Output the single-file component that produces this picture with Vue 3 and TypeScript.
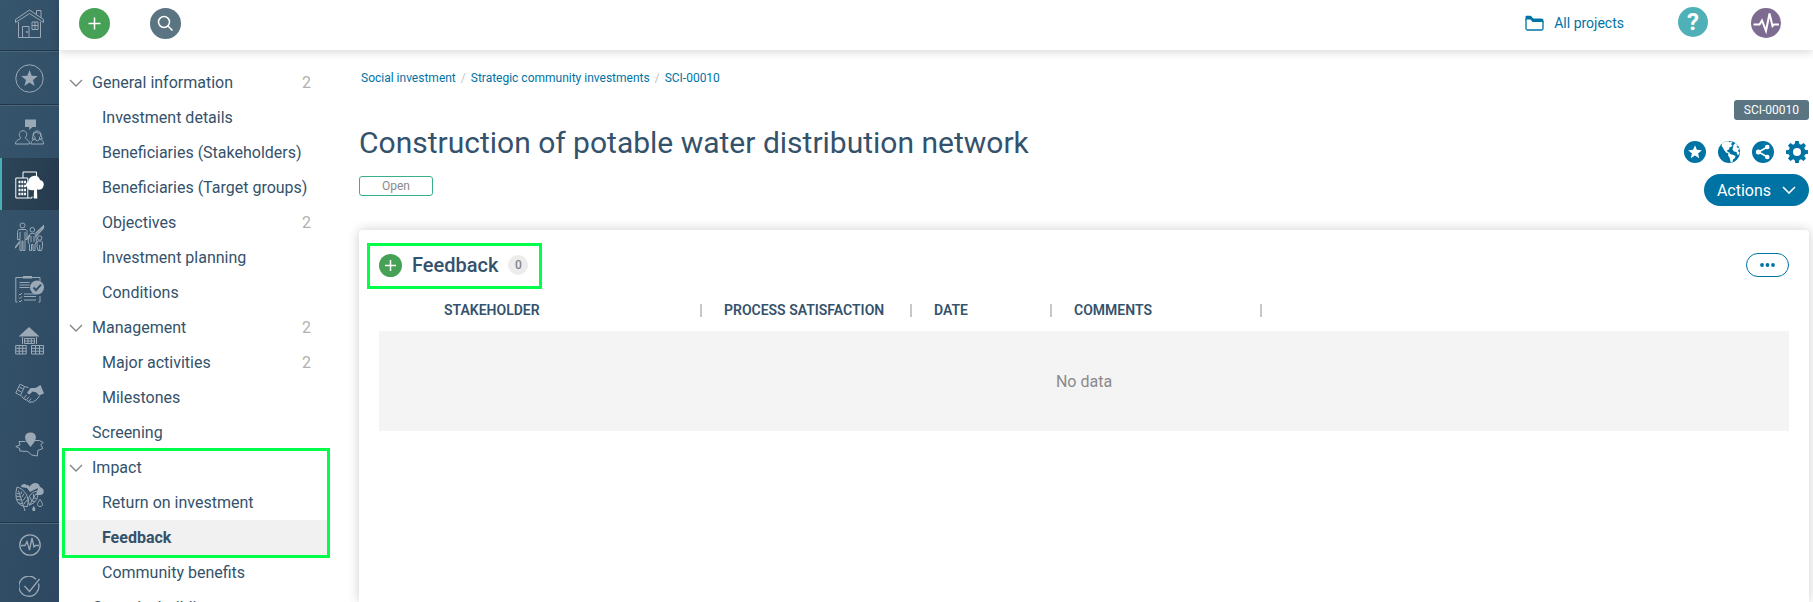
<script setup lang="ts">
interface NavRow { label: string; level: 1 | 2; open?: boolean; count?: number; active?: boolean }
interface NavGroup { marked?: boolean; rows: NavRow[] }
interface Column { label: string; width: string }

const groups: NavGroup[] = [
  {
    rows: [
      { label: 'General information', level: 1, open: true, count: 2 },
      { label: 'Investment details', level: 2 },
      { label: 'Beneficiaries (Stakeholders)', level: 2 },
      { label: 'Beneficiaries (Target groups)', level: 2 },
      { label: 'Objectives', level: 2, count: 2 },
      { label: 'Investment planning', level: 2 },
      { label: 'Conditions', level: 2 },
      { label: 'Management', level: 1, open: true, count: 2 },
      { label: 'Major activities', level: 2, count: 2 },
      { label: 'Milestones', level: 2 },
      { label: 'Screening', level: 1 },
    ],
  },
  {
    marked: true,
    rows: [
      { label: 'Impact', level: 1, open: true },
      { label: 'Return on investment', level: 2 },
      { label: 'Feedback', level: 2, active: true },
    ],
  },
  {
    rows: [
      { label: 'Community benefits', level: 2 },
      { label: 'Capacity building', level: 1 },
    ],
  },
]

const crumbs = ['Social investment', 'Strategic community investments', 'SCI-00010']

const columns: Column[] = [
  { label: 'STAKEHOLDER', width: '280px' },
  { label: 'PROCESS SATISFACTION', width: '210px' },
  { label: 'DATE', width: '140px' },
  { label: 'COMMENTS', width: '210px' },
]
</script>

<template>
  <div class="app">
    <nav class="rail" aria-label="Modules">
      <a href="#" class="rail-item first line" aria-label="Home">
        <svg class="glyph" viewBox="0 0 29 29">
          <path d="M3.5 13v15.5h22V13M.5 10.5 14.5 1l14 9.5v3l-14-9-14 9zM21.5 5.5v-4H26v7M7.5 28V17.5H14V28M17 13h6v7.500h-6zM20 13v7.500M17 16.500h6" />
          <circle class="fill" cx="12" cy="23" r="1" />
        </svg>
      </a>
      <a href="#" class="rail-item second line" aria-label="Favorites">
        <svg class="glyph" viewBox="0 0 29 29">
          <circle cx="14.5" cy="14.5" r="13.7" />
          <path class="fill" d="m14.5 6 2.200 5.800 6.100.3-4.800 3.800 1.600 6-5.100-3.400-5.100 3.400 1.600-6-4.800-3.800 6.100-.3z" />
        </svg>
      </a>
      <a href="#" class="rail-item third" aria-label="Stakeholders">
        <svg class="glyph" viewBox="0 0 29 29">
          <path class="fill" d="M10 2.500h11V10h-3.500l-3.300 3v-3H10z" />
          <path d="M5.800 20.800C3.200 18.500 4 13.700 8 13.700s4.800 4.800 2.200 7.100c0 1.700 4.300 1.500 4.300 6.200H.5c0-4.700 5.300-4.500 5.300-6.200zM20 21.500c-1 1.500-4 1.500-4 5.500h12.500c0-4-3-4-4-5.500M17 22c1.500-2 0-8 5-8s3.500 6 5.500 8l-3 .3v-2c1.500-1.300 1.300-3 1-4-2 0-3.500-.5-4.500-1.300-.5 1-2 1.500-2.500 2 0 1.500.5 2.500 1.500 3.300v2zM20 22.500l2.300 1.500 2.300-1.500" />
        </svg>
      </a>
      <a href="#" class="rail-item current" aria-label="Social investment">
        <svg class="glyph" viewBox="0 0 29 29">
          <path d="M.8 8h12v20H.8zM8 8V2h13.500v5M12.500 28H17M17 26.500V28" />
          <path d="M3.500 12h7.500M3.500 16h7.500M3.500 20h7.500M3.500 24h7.500" stroke-width="2.400" stroke-dasharray="2 .8" />
          <path class="fill" d="M18.700 28.500 19 20c-3.500 1-6.500-.5-6.500-2.500-3-2-1-5.500 1-6 0-3.500 2.500-5 5-5.500 3.500-1 6 1.500 6.500 4 3 .3 5 4 3 7 0 2-3 3-6 2.500l.3 9z" />
        </svg>
      </a>
      <a href="#" class="rail-item" aria-label="Communities">
        <svg class="glyph" viewBox="0 0 29 29">
          <circle cx="7.500" cy="3.500" r="2.500" />
          <path d="M5 7.500h5c2 0 2 1.500 2 3v7h-2v11H8V19H7v9.500H5V17.500H2.500v-7c0-1.500.5-3 2.500-3zM5 10v7M10 10v7" />
          <circle cx="17.300" cy="7.800" r="2.300" />
          <path d="M14.500 12.500c1-1.500 5-1.500 6 0l1 7-1.500 3v6h-2v-6h-1.500v6h-2v-6L13 20zM16 14v6M19 14v6" />
          <circle cx="24.700" cy="16" r="2.200" />
          <path d="M22 20c1-1.500 4.500-1.500 5.500 0v4.500l-1 4h-3.500l-1-4zM24.700 23v5" />
          <path d="m0 26 4.500-6M12 17l3-4M20.500 11.500 29 3.500v2l-8 8.500" stroke-width="1.500" />
        </svg>
      </a>
      <a href="#" class="rail-item" aria-label="Commitments">
        <svg class="glyph" viewBox="0 0 29 29">
          <path d="M2.500 28H.8V3.500H8M17 3.500h8v4M25 22v6h-1.500" />
          <path class="fill" d="M8 2h9v2.500H8z" />
          <path d="M4.500 8.500h10M4.500 11h10M4.500 13.500h10M9 20h12M9 22.500h12M9 26h12" />
          <path d="m4 20 1 1 2-2M4 23.500l1 1 2-2M4 27l1 1 2-2" />
          <circle class="fill" cx="22" cy="13.500" r="7" />
          <path class="cut" d="m18.500 13.500 2.500 2.700 5-5.500" />
        </svg>
      </a>
      <a href="#" class="rail-item" aria-label="Facilities">
        <svg class="glyph" viewBox="0 0 29 29">
          <path class="fill" d="M14 1 24.500 10.500h-21z" />
          <path d="M7.500 11v7M21.500 11v7M9.500 12.500h10v5h-10zM13 12.500v5M16.300 12.500v5M9.500 15h10M.7 19.500h10.500v8.500H.7zM4.200 19.500V28M7.700 19.500V28M.7 22.300h10.500M.7 25.200h10.500M16.500 19.500h12V28h-12zM20.500 19.500V28M24.500 19.500V28M16.500 22.300h12M16.500 25.200h12" />
        </svg>
      </a>
      <a href="#" class="rail-item" aria-label="Agreements">
        <svg class="glyph" viewBox="0 0 29 29">
          <path d="M5 6.200 9.500 8.500 5.500 17.500.8 15zM4.500 9.200l3 1.500M3 12.300l3 1.500M9.500 8.700l4 .8M6 17.500l3 3.500 2.500 1 3 2.300 4-.5 3.500-2.500 2.500-3.500M9 20l2.500-3M11.500 21.700l2.500-3M14 23.500l2-3" />
          <path class="fill" d="m12 15 3.500-5h5l5-3 3.500 8.500-5 2-2.500-3-4-1-3 3z" />
        </svg>
      </a>
      <a href="#" class="rail-item" aria-label="Land">
        <svg class="glyph" viewBox="0 0 29 29">
          <path class="fill" d="M15.500 2.500c-7 0-6 7-3.500 10l3.500 4.500 3.500-4.500c2.500-3 3.500-10-3.500-10z" />
          <path d="M10.500 11.500H4L5 15 .8 16.500l4 2v2.500l8 .5 4 3.500 5.500 1 .5-5.500 5-2-2-4 2.500-2-4-2h-4.500" />
        </svg>
      </a>
      <a href="#" class="rail-item" aria-label="Environment">
        <svg class="glyph" viewBox="0 0 29 29">
          <path class="fill" d="M6 5c0-3 4.500-4 5.500-1.500 1-1 3 0 3 1.500C17-.5 24-.5 25 5c5 1 5 8 0 8h-4l2-7-8 4-3-4z" />
          <path d="M2 5c7 2 13 9 10.500 19.500C2 25-1 16 2 5zM3.500 8.500 10 29M4.500 12 2 11.500M5.500 15 1 14M6.500 18l-5-.5M7.500 21.500l-4-.5M6 12l.7-2.500M7 15l2-3.500M8 18.500l3-4M9 22l3-4M22.500 9c-7 1-11 7-8 14C22 20 23.500 16 22.500 9zM21 11.500l-6.500 12M18.500 16l3 .5M17 19l3 .5M18.500 16v-4M16.500 19l-1-3.500" />
          <path d="M25 17.500c-3.500 4.500-3 7 0 7s3.500-2.500 0-7z" />
          <path class="fill" d="M18.800 24c-2.500 3.500-1.500 5 0 5s2.500-1.500 0-5z" />
        </svg>
      </a>
      <div class="rail-tools">
        <a href="#" class="rail-item small" aria-label="Activity">
          <svg class="glyph tiny" viewBox="0 0 22 22">
            <circle cx="11" cy="11" r="10.200" />
            <path d="M2 11.500h4l2-4 2.500 8.500 2.500-12 2 9 1.500-1.500H20" />
          </svg>
        </a>
        <a href="#" class="rail-item small" aria-label="Tasks">
          <svg class="glyph tiny" viewBox="0 0 22 22">
            <path d="M19.500 7.500A10 10 0 1 1 17 3.200M5.500 10l5 5.500L20.500 3" />
          </svg>
        </a>
      </div>
    </nav>

    <div class="shell">
      <header class="topbar">
        <button type="button" class="round green" aria-label="Add">
          <svg width="31" height="31" viewBox="0 0 31 31"><path d="M15.500 9.500v12M9.500 15.500h12" /></svg>
        </button>
        <button type="button" class="round slate" aria-label="Search">
          <svg width="31" height="31" viewBox="0 0 31 31"><circle cx="14" cy="14" r="5.500" /><path d="m18 18 4.500 4.500" /></svg>
        </button>
        <a href="#" class="projects">
          <svg width="19" height="17" viewBox="0 0 19 17">
            <path d="M1 4v9.500c0 1.200.5 1.500 1.500 1.500h14c1 0 1.500-.3 1.500-1.500V6.500" fill="none" stroke="#0073a5" stroke-width="1.300" />
            <path d="M.5 6V2.200C.5 1.300 1 .8 2 .8h3.600c1.200 0 1.600 2.700 3 2.700H16c1.500 0 2.500.8 2.500 2V8c-.3-.6-1-.9-2-.9H8.500C6.500 7.100 6.500 4.400 4.800 4.400H2C1 4.400.6 5 .5 6z" fill="#0073a5" />
          </svg>
          All projects
        </a>
        <button type="button" class="round teal" aria-label="Help">?</button>
        <button type="button" class="round purple" aria-label="Activity">
          <svg width="30" height="30" viewBox="0 0 30 30"><path d="M2.500 16.500h6l2.500-4 4 10.500L18.500 5.500l3 12.500 1.500-1.500h5" stroke-width="2" /></svg>
        </button>
      </header>

      <div class="body">
        <nav class="tree" aria-label="Sections">
          <div v-for="(group, g) in groups" :key="g" class="group">
            <a
              v-for="row in group.rows"
              :key="row.label"
              href="#"
              class="row"
              :class="{ child: row.level === 2, active: row.active }"
            >
              <span class="toggle">
                <svg v-if="row.open" width="14" height="8" viewBox="0 0 14 8"><path d="m1 1 6 6 6-6" /></svg>
              </span>
              <span class="label">{{ row.label }}</span>
              <span v-if="row.count" class="count">{{ row.count }}</span>
            </a>
            <div v-if="group.marked" class="mark"></div>
          </div>
        </nav>

        <main class="main">
          <nav class="crumbs" aria-label="Breadcrumb">
            <template v-for="(crumb, i) in crumbs" :key="crumb">
              <span v-if="i" class="slash">/</span>
              <a href="#">{{ crumb }}</a>
            </template>
          </nav>

          <div class="head">
            <div class="head-left">
              <h1>Construction of potable water distribution network</h1>
              <span class="status">Open</span>
            </div>
            <div class="head-right">
              <span class="tag">SCI-00010</span>
              <div class="icons">
                <button type="button" aria-label="Favorite">
                  <svg width="22" height="22" viewBox="0 0 22 22"><circle cx="11" cy="11" r="11" /><path class="white" d="m11 4.300 1.900 4.500 4.900.4-3.700 3.200 1.100 4.800-4.200-2.600-4.200 2.600 1.100-4.800-3.700-3.200 4.900-.4z" /></svg>
                </button>
                <button type="button" aria-label="Website">
                  <svg width="22" height="22" viewBox="0 0 22 22">
                    <circle cx="11" cy="11" r="11" />
                    <path class="white" d="M4 2.500 7 .5l3.500-.3 1 1 1.500-.7 1.500 1-1.500 1.500 1.500 2-3 1.500-.5 2-2 .7.8 1.800 1.700.5.500 1.500 3.500 1 2 1-.5 2-2 1.500-.5 2.500-1.700.5-1.300-5-1.500-2 .5-2-2.500-1-2.500-3.500L5 6.500 3.500 5z" />
                    <path class="white" d="m15 6.500.5-2.500L17.500 2l2.500 3-1.500.5.5 1 1.800.5.7 2-1.500-.5.5 2.500h1l-.5 2.500-1.500.5-1-3-2.500-.5-1.500-2z" />
                  </svg>
                </button>
                <button type="button" aria-label="Share">
                  <svg width="22" height="22" viewBox="0 0 22 22"><circle cx="11" cy="11" r="11" /><path d="M15.500 6 6.500 11l9 5" fill="none" stroke="#fff" stroke-width="1.600" /><circle class="white" cx="15.300" cy="6" r="2.300" /><circle class="white" cx="6.300" cy="11" r="2.500" /><circle class="white" cx="15.300" cy="16" r="2.300" /></svg>
                </button>
                <button type="button" aria-label="Settings">
                  <svg width="22" height="22" viewBox="0 0 22 22"><path fill-rule="evenodd" d="M9.200 0h3.600l.6 3 1.600.7L17.600 2 20 4.500l-1.700 2.600.7 1.600 3 .6v3.500l-3 .6-.7 1.600 1.700 2.600-2.500 2.400-2.500-1.700-1.600.7-.6 3H9.200l-.6-3-1.600-.7L4.500 20 2 17.600l1.700-2.600-.7-1.600-3-.6V9.300l3-.6.7-1.600L2 4.500 4.500 2 7 3.700 8.600 3zM11 7a4 4 0 1 0 0 8 4 4 0 0 0 0-8z" /></svg>
                </button>
              </div>
              <button type="button" class="actions">
                Actions
                <svg width="14" height="8" viewBox="0 0 14 8"><path d="m1 1 6 6 6-6" /></svg>
              </button>
            </div>
          </div>

          <section class="card">
            <div class="card-head">
              <div class="card-title">
                <button type="button" class="round green" aria-label="Add feedback">
                  <svg width="23" height="23" viewBox="0 0 23 23"><path d="M11.500 6v11M6 11.500h11" /></svg>
                </button>
                <h2>Feedback</h2>
                <span class="badge">0</span>
                <div class="mark"></div>
              </div>
              <button type="button" class="more" aria-label="More">
                <svg width="15" height="4" viewBox="0 0 15 4"><circle cx="2" cy="2" r="1.900" /><circle cx="7.500" cy="2" r="1.900" /><circle cx="13" cy="2" r="1.900" /></svg>
              </button>
            </div>
            <table>
              <colgroup>
                <col class="lead" />
                <col v-for="column in columns" :key="column.label" :style="{ width: column.width }" />
                <col />
              </colgroup>
              <thead>
                <tr>
                  <td></td>
                  <th v-for="column in columns" :key="column.label" scope="col"><div>{{ column.label }}</div></th>
                  <td></td>
                </tr>
              </thead>
              <tbody>
                <tr><td class="empty" colspan="6">No data</td></tr>
              </tbody>
            </table>
          </section>
        </main>
      </div>
    </div>
  </div>
</template>

<style>
body { margin: 0; background: #fff; }
</style>

<style scoped>
* { box-sizing: border-box; }
.app {
  display: flex;
  height: 100vh;
  overflow: hidden;
  font-family: Roboto, "Liberation Sans", sans-serif;
  font-size: 16px;
  color: #34526b;
}
a { color: inherit; text-decoration: none; }
button { font: inherit; border: 0; padding: 0; margin: 0; background: none; cursor: pointer; }
svg { display: block; flex: none; }

.rail {
  flex: none;
  width: 59px;
  overflow: hidden;
  background: linear-gradient(100deg, #36566e, #2d4860);
}
.rail-item {
  display: flex;
  align-items: center;
  justify-content: center;
  height: 52px;
  color: #9ba9b6;
}
.rail-item.first { height: 51px; padding-bottom: 4px; }
.rail-item.second { height: 54px; padding-top: 2px; }
.rail-item.third { height: 53px; }
.line { border-bottom: 1px solid #22384a; box-shadow: 0 1px 0 #48657b; }
.rail-item.current {
  color: #fff;
  background: linear-gradient(100deg, #2c4558, #263b4d);
  box-shadow: inset 2px 0 0 #48b0b5;
}
.rail-item.small { height: 42px; }
.rail-tools { padding-top: 1px; border-top: 1px solid #22384a; box-shadow: inset 0 1px 0 #48657b; }
.glyph { width: 29px; height: 29px; fill: none; stroke: currentColor; stroke-width: 1; }
.glyph.tiny { width: 22px; height: 22px; stroke-width: 1.3; }
.glyph .fill { fill: currentColor; stroke: none; }
.glyph .cut { stroke: #31506a; stroke-width: 2; }

.shell { flex: 1; min-width: 0; display: flex; flex-direction: column; }
.topbar {
  position: relative;
  z-index: 1;
  flex: none;
  display: flex;
  align-items: center;
  height: 50px;
  padding: 0 32px 4px 20px;
  background: #fff;
  box-shadow: 0 2px 9px rgba(0, 0, 0, 0.16);
}
.round {
  display: flex;
  align-items: center;
  justify-content: center;
  border-radius: 50%;
  color: #fff;
}
.round svg { fill: none; stroke: #fff; stroke-width: 1.5; }
.green { background: #46a055; }
.slate { background: #5a7482; margin-left: 40px; }
.projects {
  display: flex;
  align-items: center;
  gap: 10px;
  margin-left: auto;
  font-size: 14px;
  color: #0073a5;
}
.teal {
  width: 30px;
  height: 30px;
  margin: 0 43px 2px 54px;
  background: #4fb0b8;
  font-size: 24px;
  font-weight: 700;
  line-height: 30px;
}
.purple { background: #7d6b91; }

.body { flex: 1; min-height: 0; display: flex; }
.tree { flex: none; width: 270px; padding-top: 15px; }
.group { position: relative; }
.row {
  display: flex;
  align-items: center;
  height: 35px;
  padding: 0 18px 0 10px;
}
.toggle { flex: none; width: 23px; }
.child .toggle { width: 33px; }
.toggle svg { fill: none; stroke: #858585; stroke-width: 1.4; }
.label { flex: 1; white-space: nowrap; }
.count { color: #b0b0b0; }
.active { background: #f1f1f1; font-weight: 700; }
.mark { position: absolute; border: 3px solid #00ff48; pointer-events: none; }
.group .mark { inset: -2px -1px -3px 3px; }

.main {
  flex: 1;
  min-width: 0;
  display: flex;
  flex-direction: column;
  padding: 20px 4px 0 30px;
}
.crumbs { display: flex; gap: 5px; padding-left: 2px; font-size: 12px; line-height: 16px; color: #0073a5; }
.slash { color: #c4c4c4; }
.head { display: flex; justify-content: space-between; padding: 14px 0 24px; }
.head-left { padding-top: 22px; }
h1 { margin: 0; font-size: 30px; line-height: 42px; font-weight: 400; }
.status {
  display: block;
  width: 74px;
  margin-top: 12px;
  border: 1px solid #3cb08d;
  border-radius: 3px;
  font-size: 12px;
  line-height: 18px;
  text-align: center;
  color: #8a8a8a;
}
.head-right { display: flex; flex-direction: column; align-items: flex-end; }
.tag {
  padding: 0 10px;
  border-radius: 3px;
  background: #5a7482;
  color: #fff;
  font-size: 12px;
  line-height: 20px;
}
.icons { display: flex; gap: 12px; margin: 21px 1px 11px; }
.icons svg { fill: #0073a5; }
.icons .white { fill: #fff; }
.actions {
  display: flex;
  align-items: center;
  justify-content: center;
  gap: 11px;
  width: 105px;
  height: 32px;
  border-radius: 16px;
  background: #0073a5;
  color: #fff;
}
.actions svg { fill: none; stroke: #fff; stroke-width: 1.6; }

.card {
  flex: 1;
  padding: 23px 20px 0;
  border-radius: 4px 4px 0 0;
  background: #fff;
  box-shadow: 0 0 12px rgba(0, 0, 0, 0.2);
}
.card-head { display: flex; align-items: center; justify-content: space-between; }
.card-title { position: relative; display: flex; align-items: center; gap: 10px; }
.card-title .mark { inset: -10px -14px -12px -12px; }
h2 { margin: 0; font-size: 20px; line-height: 24px; font-weight: 500; }
.badge {
  width: 20px;
  border-radius: 10px;
  background: #ececec;
  color: #858585;
  font-size: 12px;
  font-weight: 500;
  line-height: 20px;
  text-align: center;
}
.more {
  display: flex;
  align-items: center;
  justify-content: center;
  width: 43px;
  height: 24px;
  border: 1px solid #0073a5;
  border-radius: 12px;
}
.more svg { fill: #0073a5; }

table { width: 100%; margin-top: 12px; border-collapse: collapse; table-layout: fixed; }
.lead { width: 43px; }
thead td { padding: 0; }
th { height: 42px; padding: 0; text-align: left; font-size: 14px; font-weight: 600; }
th div { padding-left: 22px; border-right: 2px solid #c8c8c8; line-height: 13px; white-space: nowrap; }
.empty { height: 100px; padding: 0; background: #f4f4f4; color: #8a8a8a; text-align: center; }
</style>
